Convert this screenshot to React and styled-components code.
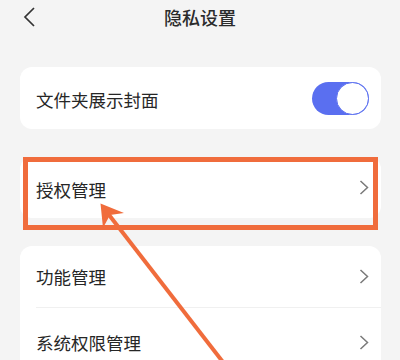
import React from "react";
import styled, { createGlobalStyle } from "styled-components";

const GlobalStyle = createGlobalStyle`
  body {
    margin: 0;
    background: #f4f4f4;
    font-family: "Noto Sans CJK SC", "Noto Sans", sans-serif;
  }
`;

const Page = styled.div`
  position: relative;
  width: 400px;
  height: 360px;
  overflow: hidden;
  background: #f4f4f4;
`;

const Header = styled.div`
  position: relative;
  height: 36px;
  display: flex;
  align-items: center;
  justify-content: center;
`;

const Back = styled.div`
  position: absolute;
  left: 23px;
  top: 7px;
  display: flex;
`;

const Title = styled.div`
  font-size: 18px;
  font-weight: 500;
  color: #2b2b2b;
  line-height: 1;
  margin-top: -2px;
`;

const List = styled.div`
  display: flex;
  flex-direction: column;
  padding: 31px 19px 0 20px;
`;

const Card = styled.div`
  background: #fff;
  border-radius: 12px;
  margin-bottom: ${(p) => p.gap || 0}px;
  overflow: hidden;
`;

const Row = styled.div`
  height: ${(p) => p.h}px;
  display: flex;
  align-items: center;
  justify-content: space-between;
  padding: 0 12px 0 16px;
  border-bottom: ${(p) => (p.divider ? "1px solid #f0f0f0" : "none")};
  margin-left: ${(p) => (p.divider ? "16px" : "0")};
  padding-left: ${(p) => (p.divider ? "0" : "16px")};
`;

const Label = styled.span`
  font-size: 17.5px;
  color: #262626;
  padding-top: ${(p) => p.shift || 0}px;
`;

const Toggle = styled.div`
  width: 57px;
  height: 33px;
  border-radius: 17px;
  background: #5a6ff0;
  display: flex;
  align-items: center;
  justify-content: flex-end;
  box-sizing: border-box;
`;

const Knob = styled.div`
  width: 33px;
  height: 33px;
  border-radius: 50%;
  background: #fff;
  border: 1.5px solid #5a6ff0;
  box-sizing: border-box;
`;

const Highlight = styled.div`
  position: absolute;
  left: 23px;
  top: 157px;
  width: 355px;
  height: 73px;
  border: 5px solid #f06c3c;
  box-sizing: border-box;
  pointer-events: none;
`;

const ArrowLayer = styled.svg`
  position: absolute;
  left: 0;
  top: 0;
  pointer-events: none;
`;

const Chevron = () => (
  <svg width="10" height="15" viewBox="0 0 10 15">
    <path d="M1.5 1 L8.5 7.5 L1.5 14" fill="none" stroke="#7a7a7a" strokeWidth="1.5" />
  </svg>
);

export default function App() {
  return (
    <Page>
      <GlobalStyle />
      <Header>
        <Back>
          <svg width="12" height="20" viewBox="0 0 12 20">
            <path d="M11 1 L2 10 L11 19" fill="none" stroke="#333" strokeWidth="1.7" />
          </svg>
        </Back>
        <Title>隐私设置</Title>
      </Header>
      <List>
        <Card gap={28}>
          <Row h={62}>
            <Label shift={3}>文件夹展示封面</Label>
            <Toggle>
              <Knob />
            </Toggle>
          </Row>
        </Card>
        <Card gap={28}>
          <Row h={61}>
            <Label shift={3}>授权管理</Label>
            <Chevron />
          </Row>
        </Card>
        <Card>
          <Row h={61} divider>
            <Label>功能管理</Label>
            <Chevron />
          </Row>
          <Row h={68}>
            <Label>系统权限管理</Label>
            <Chevron />
          </Row>
        </Card>
      </List>
      <Highlight />
      <ArrowLayer width="400" height="360" viewBox="0 0 400 360">
        <line x1="226" y1="366" x2="106" y2="211" stroke="#f06c3c" strokeWidth="4" />
        <polygon points="100.5,203.5 124,213 110,215 103,228" fill="#f06c3c" />
      </ArrowLayer>
    </Page>
  );
}
